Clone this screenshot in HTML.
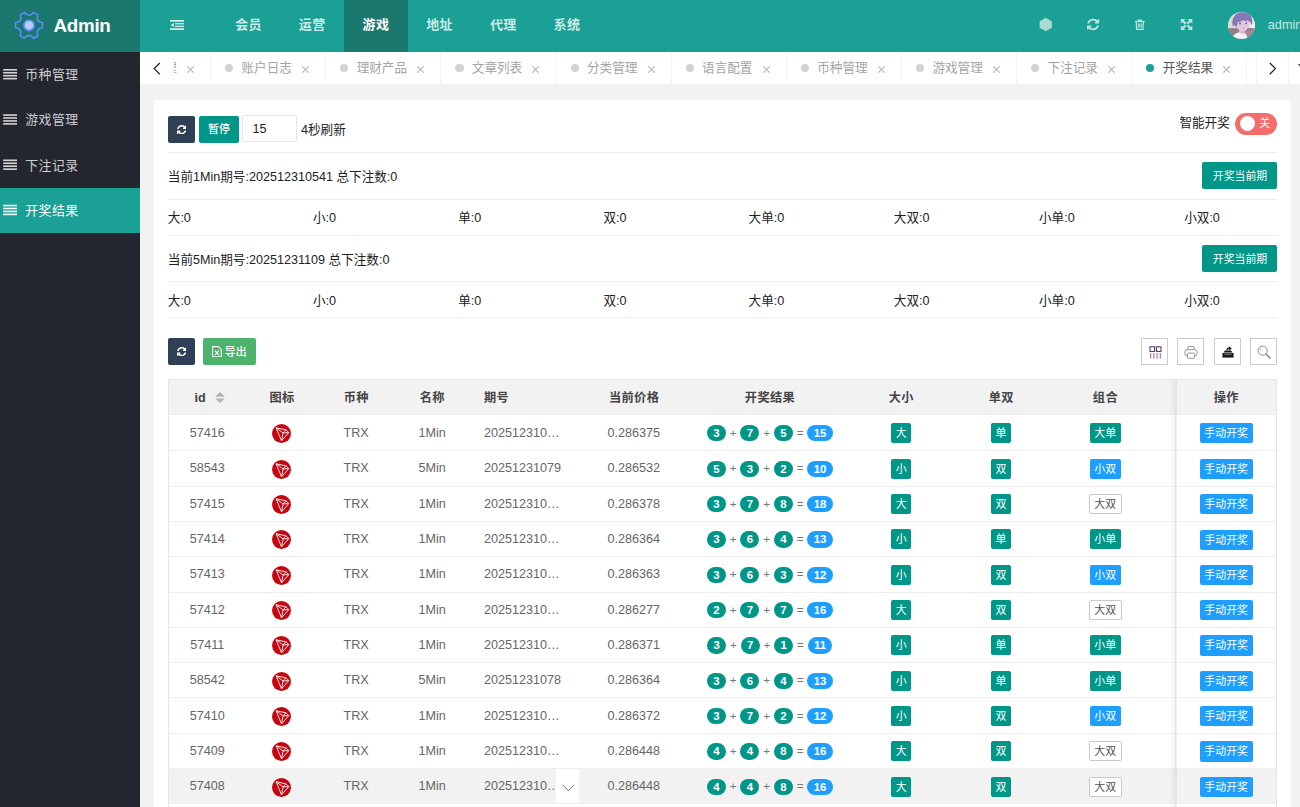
<!DOCTYPE html>
<html lang="zh-CN"><head><meta charset="utf-8"><title>Admin</title>
<style>
*{box-sizing:border-box;margin:0;padding:0}
html,body{width:1300px;height:807px;overflow:hidden;background:#f2f2f2}
body{font-family:"Liberation Sans","Noto Sans CJK SC",sans-serif;font-size:12.6px;color:#222;position:relative}
.abs{position:absolute}
/* header */
.hd{position:absolute;left:0;top:0;width:1300px;height:52px;background:#1aa094}
.logo{position:absolute;left:0;top:0;width:140px;height:52px;background:#1a786e}
.logo .gear{position:absolute;left:14px;top:11px}
.logo .nm{position:absolute;left:53.6px;top:0;line-height:51.6px;font-size:18.8px;letter-spacing:-.3px;font-weight:bold;color:#fff}
.flex{position:absolute;left:170px;top:20px}
.nav{position:absolute;left:216.5px;top:0;height:52px;display:flex}
.nav a{display:block;width:63.7px;height:52px;line-height:49px;text-align:center;color:rgba(255,255,255,.78);font-size:13px;letter-spacing:.4px;text-indent:.4px;font-weight:bold}
.nav a.on{background:#1a786e;color:#fff}
.tool{position:absolute;top:0;color:#bbe3df}
.uname{position:absolute;left:1267.8px;top:0;line-height:50.8px;font-size:12.7px;color:#c4e8e3;white-space:nowrap}
.avatar{position:absolute;left:1227.8px;top:11.8px;width:27.6px;height:27.6px;border-radius:50%;overflow:hidden}
/* sidebar */
.side{position:absolute;left:0;top:52px;width:140px;height:755px;background:#23262e}
.side a{position:absolute;left:0;width:140px;height:45.25px;line-height:45.6px;color:rgba(255,255,255,.78);font-size:12.9px;letter-spacing:.5px;padding-left:25.2px;white-space:nowrap}
.side a.on{background:#1aa094;color:#fff}
.side a i{position:absolute;left:3.2px;top:17.4px;width:13.8px;height:12px;display:block}
.side a i b{display:block;height:1.55px;margin-bottom:1.4px;background:currentColor}
/* tabs */
.tabs{position:absolute;left:140px;top:52px;width:1160px;height:32.2px;background:#fff;overflow:hidden}
.tab{position:absolute;top:0;height:32.2px;width:115.15px;border-right:1px solid #f3f3f3;line-height:33.4px;color:#a4a4a4;white-space:nowrap}
.tab .dot{position:absolute;left:14px;top:12.2px;width:8.2px;height:8.2px;border-radius:50%;background:#d2d2d2}
.tab .tx{position:absolute;left:30.4px;top:0}
.tab .cl{position:absolute;left:91px;top:13.5px}
.tab.on{color:#555}
.tab.on .dot{background:#1aa094}
.ctl{position:absolute;top:0;height:32.2px;background:#fff}
/* main */
.main{position:absolute;left:140px;top:84px;width:1160px;height:723px;background:#f2f2f2}
.card{position:absolute;left:14.4px;top:16px;width:1136.8px;height:720px;background:#fff;border-radius:3px}
.hr{position:absolute;left:13.6px;width:1109px;height:1px;background:#eee}
.btn{position:absolute;height:27.3px;line-height:27.3px;border-radius:2px;color:#fff;font-size:10.9px;text-align:center;white-space:nowrap}
.b-cyan{background:#2f4056}
.b-green{background:#009688}
.b-exp{background:#4db26c}
.inp{position:absolute;border:1px solid #e6e6e6;border-radius:2px;background:#fff;line-height:25px;padding-left:10px;font-size:12.6px;color:#222}
.t{position:absolute;white-space:nowrap;line-height:16px}
.tbox{position:absolute;width:27px;height:27px;border:1px solid #ccc;background:#fff}
.sw{position:absolute;left:1080.4px;top:13.2px;width:42.4px;height:21.6px;border-radius:11px;background:#f56c6c}
.sw:before{content:"";position:absolute;left:5px;top:3.3px;width:15px;height:15px;border-radius:50%;background:#fff}
.sw span{position:absolute;left:24.4px;top:0;line-height:21.6px;font-size:10.9px;color:#fff}
/* table */
.tbwrap{position:absolute;left:13.9px;top:279px;width:1108.6px;height:460px;border-top:1px solid #e6e6e6;border-left:1px solid #e6e6e6;border-right:1px solid #e6e6e6;overflow:hidden}
.tb{border-collapse:separate;border-spacing:0;table-layout:fixed;width:1106.6px}
.tb th,.tb td{height:35.34px;padding:0 13.5px;border-bottom:1px solid #eee;white-space:nowrap;overflow:hidden;text-align:center;color:#666;font-size:12.6px;font-weight:normal;vertical-align:middle;position:relative}
.tb th{background:#f2f2f2;color:#444;font-weight:bold;height:35.2px}
.tb td{background:#fff}
.tb tbody tr:first-child td{height:36px}
.tb tr.hov td{background:#f2f2f2}
.c-id{width:76px}.c-ic{width:73px}.c-bz{width:75.6px}.c-mc{width:76.6px}.c-qh{width:104.8px}.c-pr{width:117.2px}.c-rs{width:154.7px}.c-dx{width:108px}.c-ds{width:91.8px}.c-zh{width:128.5px}.c-op{width:100.4px}
.tb .c-qh{text-align:left}
.ell{overflow:hidden;text-overflow:ellipsis;white-space:nowrap}
.trx{display:block;margin:0 auto;position:relative;top:0.8px}
.bd{display:inline-block;height:16.4px;line-height:16.4px;padding:0 6.4px;border-radius:9px;background:#009688;color:#fff;font-size:11.4px;font-weight:bold;vertical-align:middle;position:relative;top:0.4px}
.bd.bl{background:#1e9fff}
.tg{display:inline-block;height:20px;line-height:20px;padding:0 4.6px;border-radius:2px;background:#009688;color:#fff;font-size:10.9px;vertical-align:middle;position:relative;top:0.4px}
.tg.b{background:#1e9fff}
.tg.w{background:#fff;color:#555;border:1px solid #c9c9c9;line-height:18px}
.op{display:inline-block;height:20.2px;line-height:20.2px;padding:0 4.6px;border-radius:2px;background:#1e9fff;color:#fff;font-size:10.9px;vertical-align:middle;position:relative;top:0.6px}
.tb .c-zh{padding-right:25.4px}
.tb .c-op{border-left:1px solid #eee}
.fixshadow{position:absolute;left:1000px;top:0;width:8px;height:460px;background:linear-gradient(to right,rgba(0,0,0,0),rgba(0,0,0,.06));pointer-events:none}
.sort{display:inline-block;width:10px;height:11px;margin-left:10px;vertical-align:middle;position:relative;top:0.2px;left:2.6px}
.griddown{position:absolute;right:-4.2px;top:0;width:23px;height:33.7px;background:#fff;display:flex;align-items:center;justify-content:center;z-index:3}
.griddown svg{position:relative;top:1.6px;left:.3px}
.tb td.c-qh{overflow:visible}

.ht{position:relative;top:-0.3px;font-size:12.2px;letter-spacing:.4px;margin-right:-.4px}
.hl{position:relative;top:0.8px;left:2.9px}
.sy{font-size:11.7px;color:#777;padding:0 .27px;position:relative;top:.7px}

</style></head><body>
<div class="hd">
<div class="logo"><svg class="gear" width="30" height="29" viewBox="0 0 30 29"><path d="M28.48 16.75 L28.48 11.85 L25.83 11.09 Q22.97 9.70 23.20 6.52 L23.86 3.85 L19.62 1.40 L17.64 3.31 Q15.00 5.10 12.36 3.31 L10.38 1.40 L6.14 3.85 L6.80 6.52 Q7.03 9.70 4.17 11.09 L1.52 11.85 L1.52 16.75 L4.17 17.51 Q7.03 18.90 6.80 22.08 L6.14 24.75 L10.38 27.20 L12.36 25.29 Q15.00 23.50 17.64 25.29 L19.62 27.20 L23.86 24.75 L23.20 22.08 Q22.97 18.90 25.83 17.51 Z" fill="none" stroke="#5a8df6" stroke-width="1.6" stroke-linejoin="round"/><circle cx="15" cy="14.3" r="5.2" fill="#b9ccff" stroke="#5a8df6" stroke-width="1.8"/></svg><span class="nm">Admin</span></div>
<svg class="flex" width="14" height="10" viewBox="0 0 14 10"><g fill="#d9f1ee"><rect x="0" y="0" width="14" height="1.7"/><rect x="4.9" y="3.15" width="9.1" height="1.2"/><rect x="4.9" y="5.75" width="9.1" height="1.2"/><rect x="0" y="8.2" width="14" height="1.7"/><path d="M0.6 4.95 L3.8 2.9 L3.8 7 Z"/></g></svg>
<div class="nav"><a class="">会员</a><a class="">运营</a><a class="on">游戏</a><a class="">地址</a><a class="">代理</a><a class="">系统</a></div>
<svg class="tool" style="left:1030px;top:0" width="180" height="52" viewBox="1030 0 180 52"><path transform="translate(1039.6 17.8) scale(0.946 0.957)" d="M6.5 0 L13 3.6 L13 10.4 L6.5 14 L0 10.4 L0 3.6 Z" fill="#a5dbd4"/><path transform="translate(1087 18.7) scale(0.00794 0.0075)" fill="#bbe3df" d="M1511 928q0 5-1 7-64 268-268 434.500T764 1536q-146 0-282.500-55T238 1324l-129 129q-19 19-45 19t-45-19-19-45V960q0-26 19-45t45-19h448q26 0 45 19t19 45-19 45l-137 137q71 66 161 102t187 36q134 0 250-65t186-179q11-17 53-117 8-23 30-23h192q13 0 22.500 9.500t9.500 22.500zm25-800v448q0 26-19 45t-45 19h-448q-26 0-45-19t-19-45 19-45l138-138Q969 256 768 256q-134 0-250 65T332 500q-11 17-53 117-8 23-30 23H50q-13 0-22.500-9.500T18 608v-7q65-268 270-434.500T768 0q146 0 284 55.500T1297 212l130-129q19-19 45-19t45 19 19 45z"/><g transform="translate(1134.5 19.1) scale(0.482 0.48)" fill="none" stroke="#c4e7e3" stroke-width="2.5"><path d="M1 5 H21"/><path d="M7.5 5 V2 H14.5 V5"/><path d="M3.5 5 L4.5 21.5 H17.5 L18.5 5"/><path d="M8 9 V18 M11 9 V18 M14 9 V18" stroke-width="2"/></g><g transform="translate(1180.8 19) scale(0.479 0.458)" fill="#bbe3df"><path d="M0 0 H10 L0 10 Z M24 0 V10 L14 0 Z M0 24 V14 L10 24 Z M24 24 H14 L24 14 Z"/><path d="M2.6 6 L6 2.6 L21.4 18 L18 21.4 Z M21.4 6 L18 2.6 L2.6 18 L6 21.4 Z"/></g></svg>
<svg class="avatar" viewBox="0 0 28 28"><rect width="28" height="28" fill="#e4e2e3"/><rect x="0" y="3" width="5" height="14" fill="#d9ddd0"/><rect x="23" y="5" width="5" height="12" fill="#f1eff0"/><rect y="16.4" width="28" height="12" fill="#927c86"/><path d="M17 20 L28 17 L28 28 L19 28 Z" fill="#a58a93"/><path d="M4 28 Q5 21.5 11.5 20.5 L16 20.8 Q19.5 22 19.8 28 Z" fill="#f6f1f6"/><path d="M11 17 L17 17 L16.5 22 Q13.5 23 11.5 21 Z" fill="#dcc0d2"/><ellipse cx="15" cy="13.2" rx="6" ry="6.6" fill="#e2c8da"/><path d="M5 15 Q3.2 8 6.5 4 Q10 -0.5 16 0.3 Q22.5 1 24.3 6.5 Q25.3 10 24 13.5 Q23 11 22 9.5 Q21 11 20.3 8.6 Q17.5 9.8 15 8 Q12.5 10.5 9.8 10.3 Q9.6 13.5 8 16.5 Q7.2 14 6.8 13 Q6 14.5 5 15Z" fill="#8577b8"/><path d="M11.2 11.2 q1 -0.6 2 0 q-0.2 1.7 -1 1.7 q-0.9 0 -1 -1.7Z" fill="#54508f"/><path d="M17.6 10.8 q0.9 -0.6 1.8 0 q-0.1 1.6 -0.9 1.6 q-0.8 0 -0.9 -1.6Z" fill="#54508f"/><ellipse cx="15.7" cy="16.9" rx="0.7" ry="0.45" fill="#b66a7a"/></svg>
<span class="uname">admin</span>
</div>
<div class="side">
<a style="top:0.00px">币种管理</a>
<a style="top:45.25px">游戏管理</a>
<a style="top:90.50px">下注记录</a>
<a class="on" style="top:135.75px">开奖结果</a>
<svg style="position:absolute;left:0;top:0" width="20" height="190" viewBox="0 0 20 190"><rect x="3.2" y="17.00" width="13.8" height="1.6" fill="#d4d4d6"/><rect x="3.2" y="19.95" width="13.8" height="1.6" fill="#d4d4d6"/><rect x="3.2" y="22.90" width="13.8" height="1.6" fill="#d4d4d6"/><rect x="3.2" y="25.85" width="13.8" height="1.6" fill="#d4d4d6"/><rect x="3.2" y="62.25" width="13.8" height="1.6" fill="#d4d4d6"/><rect x="3.2" y="65.20" width="13.8" height="1.6" fill="#d4d4d6"/><rect x="3.2" y="68.15" width="13.8" height="1.6" fill="#d4d4d6"/><rect x="3.2" y="71.10" width="13.8" height="1.6" fill="#d4d4d6"/><rect x="3.2" y="107.50" width="13.8" height="1.6" fill="#d4d4d6"/><rect x="3.2" y="110.45" width="13.8" height="1.6" fill="#d4d4d6"/><rect x="3.2" y="113.40" width="13.8" height="1.6" fill="#d4d4d6"/><rect x="3.2" y="116.35" width="13.8" height="1.6" fill="#d4d4d6"/><rect x="3.2" y="152.75" width="13.8" height="1.6" fill="#ffffff"/><rect x="3.2" y="155.70" width="13.8" height="1.6" fill="#ffffff"/><rect x="3.2" y="158.65" width="13.8" height="1.6" fill="#ffffff"/><rect x="3.2" y="161.60" width="13.8" height="1.6" fill="#ffffff"/></svg>
</div>
<div class="tabs">
<div class="tab" style="left:-44.05px"><i class="dot"></i><span class="tx">会员管理</span><svg class="cl" width="7" height="7" viewBox="0 0 7 7"><path d="M0.3 0.3 L6.7 6.7 M6.7 0.3 L0.3 6.7" stroke="#b5b5b5" stroke-width="1.1" fill="none"/></svg></div>
<div class="tab" style="left:71.10px"><i class="dot"></i><span class="tx">账户日志</span><svg class="cl" width="7" height="7" viewBox="0 0 7 7"><path d="M0.3 0.3 L6.7 6.7 M6.7 0.3 L0.3 6.7" stroke="#b5b5b5" stroke-width="1.1" fill="none"/></svg></div>
<div class="tab" style="left:186.25px"><i class="dot"></i><span class="tx">理财产品</span><svg class="cl" width="7" height="7" viewBox="0 0 7 7"><path d="M0.3 0.3 L6.7 6.7 M6.7 0.3 L0.3 6.7" stroke="#b5b5b5" stroke-width="1.1" fill="none"/></svg></div>
<div class="tab" style="left:301.40px"><i class="dot"></i><span class="tx">文章列表</span><svg class="cl" width="7" height="7" viewBox="0 0 7 7"><path d="M0.3 0.3 L6.7 6.7 M6.7 0.3 L0.3 6.7" stroke="#b5b5b5" stroke-width="1.1" fill="none"/></svg></div>
<div class="tab" style="left:416.55px"><i class="dot"></i><span class="tx">分类管理</span><svg class="cl" width="7" height="7" viewBox="0 0 7 7"><path d="M0.3 0.3 L6.7 6.7 M6.7 0.3 L0.3 6.7" stroke="#b5b5b5" stroke-width="1.1" fill="none"/></svg></div>
<div class="tab" style="left:531.70px"><i class="dot"></i><span class="tx">语言配置</span><svg class="cl" width="7" height="7" viewBox="0 0 7 7"><path d="M0.3 0.3 L6.7 6.7 M6.7 0.3 L0.3 6.7" stroke="#b5b5b5" stroke-width="1.1" fill="none"/></svg></div>
<div class="tab" style="left:646.85px"><i class="dot"></i><span class="tx">币种管理</span><svg class="cl" width="7" height="7" viewBox="0 0 7 7"><path d="M0.3 0.3 L6.7 6.7 M6.7 0.3 L0.3 6.7" stroke="#b5b5b5" stroke-width="1.1" fill="none"/></svg></div>
<div class="tab" style="left:762.00px"><i class="dot"></i><span class="tx">游戏管理</span><svg class="cl" width="7" height="7" viewBox="0 0 7 7"><path d="M0.3 0.3 L6.7 6.7 M6.7 0.3 L0.3 6.7" stroke="#b5b5b5" stroke-width="1.1" fill="none"/></svg></div>
<div class="tab" style="left:877.15px"><i class="dot"></i><span class="tx">下注记录</span><svg class="cl" width="7" height="7" viewBox="0 0 7 7"><path d="M0.3 0.3 L6.7 6.7 M6.7 0.3 L0.3 6.7" stroke="#b5b5b5" stroke-width="1.1" fill="none"/></svg></div>
<div class="tab on" style="left:992.30px"><i class="dot"></i><span class="tx">开奖结果</span><svg class="cl" width="7" height="7" viewBox="0 0 7 7"><path d="M0.3 0.3 L6.7 6.7 M6.7 0.3 L0.3 6.7" stroke="#b5b5b5" stroke-width="1.1" fill="none"/></svg></div>
<div class="ctl" style="left:0;width:34px;border-right:1px solid #f3f3f3"><svg style="position:absolute;left:13.2px;top:9.6px" width="8" height="13" viewBox="0 0 8 13"><path d="M6.8 1 L1.2 6.6 L6.8 12.2" fill="none" stroke="#1c2438" stroke-width="1.3"/></svg></div>
<div class="ctl" style="left:1107.2px;width:9.4px;border-right:1px solid #f3f3f3"></div>
<div class="ctl" style="left:1116.6px;width:32px;border-right:1px solid #f3f3f3"><svg style="position:absolute;left:12.4px;top:9.6px" width="8" height="13" viewBox="0 0 8 13"><path d="M0.8 1 L6.4 6.6 L0.8 12.2" fill="none" stroke="#1c2438" stroke-width="1.3"/></svg></div>
<div class="ctl" style="left:1148.6px;width:12px"><svg style="position:absolute;left:9.5px;top:12.2px" width="8" height="6" viewBox="0 0 8 6"><path d="M0 0 H8 L4 5 Z" fill="#333"/></svg></div>
</div>
<div class="main"><div class="card">
<div class="btn b-cyan" style="left:13.6px;top:16.0px;width:27px"><svg width="9.4" height="9.4" viewBox="0 0 1536 1536" style="position:absolute;left:8.9px;top:9.1px"><path fill="#fff" d="M1511 928q0 5-1 7-64 268-268 434.500T764 1536q-146 0-282.500-55T238 1324l-129 129q-19 19-45 19t-45-19-19-45V960q0-26 19-45t45-19h448q26 0 45 19t19 45-19 45l-137 137q71 66 161 102t187 36q134 0 250-65t186-179q11-17 53-117 8-23 30-23h192q13 0 22.500 9.500t9.500 22.500zm25-800v448q0 26-19 45t-45 19h-448q-26 0-45-19t-19-45 19-45l138-138Q969 256 768 256q-134 0-250 65T332 500q-11 17-53 117-8 23-30 23H50q-13 0-22.500-9.500T18 608v-7q65-268 270-434.500T768 0q146 0 284 55.500T1297 212l130-129q19-19 45-19t45 19 19 45z"/></svg></div>
<div class="btn b-green" style="left:44.6px;top:16.0px;width:40px;font-weight:500">暂停</div>
<div class="inp" style="left:88.0px;top:15.4px;width:54.2px;height:26.6px;line-height:26px;padding-left:9px">15</div>
<div class="t" style="left:146.6px;top:21.5px">4秒刷新</div>
<div class="t" style="left:1025.0px;top:14.5px">智能开奖</div>
<div class="sw"><span>关</span></div>
<div class="hr" style="top:52.0px"></div>
<div class="t" style="left:13.4px;top:69.0px">当前1Min期号:202512310541 总下注数:0</div>
<div class="btn b-green" style="left:1047.6px;top:62.0px;width:75px;line-height:28.6px;text-indent:1px">开奖当前期</div>
<div class="hr" style="top:99.0px"></div>
<div class="t" style="left:13.4px;top:109.6px">大:0</div>
<div class="t" style="left:158.6px;top:109.6px">小:0</div>
<div class="t" style="left:303.8px;top:109.6px">单:0</div>
<div class="t" style="left:449.0px;top:109.6px">双:0</div>
<div class="t" style="left:594.2px;top:109.6px">大单:0</div>
<div class="t" style="left:739.4px;top:109.6px">大双:0</div>
<div class="t" style="left:884.6px;top:109.6px">小单:0</div>
<div class="t" style="left:1029.8px;top:109.6px">小双:0</div>
<div class="hr" style="top:135.0px"></div>
<div class="t" style="left:13.4px;top:152.0px">当前5Min期号:20251231109 总下注数:0</div>
<div class="btn b-green" style="left:1047.6px;top:145.0px;width:75px;line-height:28.6px;text-indent:1px">开奖当前期</div>
<div class="hr" style="top:181.0px"></div>
<div class="t" style="left:13.4px;top:192.6px">大:0</div>
<div class="t" style="left:158.6px;top:192.6px">小:0</div>
<div class="t" style="left:303.8px;top:192.6px">单:0</div>
<div class="t" style="left:449.0px;top:192.6px">双:0</div>
<div class="t" style="left:594.2px;top:192.6px">大单:0</div>
<div class="t" style="left:739.4px;top:192.6px">大双:0</div>
<div class="t" style="left:884.6px;top:192.6px">小单:0</div>
<div class="t" style="left:1029.8px;top:192.6px">小双:0</div>
<div class="hr" style="top:217.0px"></div>
<div class="btn b-cyan" style="left:13.6px;top:238.0px;width:27px"><svg width="9.4" height="9.4" viewBox="0 0 1536 1536" style="position:absolute;left:8.9px;top:9.1px"><path fill="#fff" d="M1511 928q0 5-1 7-64 268-268 434.500T764 1536q-146 0-282.500-55T238 1324l-129 129q-19 19-45 19t-45-19-19-45V960q0-26 19-45t45-19h448q26 0 45 19t19 45-19 45l-137 137q71 66 161 102t187 36q134 0 250-65t186-179q11-17 53-117 8-23 30-23h192q13 0 22.500 9.500t9.500 22.500zm25-800v448q0 26-19 45t-45 19h-448q-26 0-45-19t-19-45 19-45l138-138Q969 256 768 256q-134 0-250 65T332 500q-11 17-53 117-8 23-30 23H50q-13 0-22.500-9.500T18 608v-7q65-268 270-434.500T768 0q146 0 284 55.500T1297 212l130-129q19-19 45-19t45 19 19 45z"/></svg></div>
<div class="btn b-exp" style="left:48.6px;top:238.0px;width:53px;font-weight:500;line-height:28.8px"><svg width="9.8" height="11.4" viewBox="0 0 9 10" preserveAspectRatio="none" style="vertical-align:-1.1px;margin-right:2.6px"><path d="M0.5 0.5 H6 L8.5 3 V9.5 H0.5 Z" fill="none" stroke="#fff" stroke-width="1"/><path d="M2.7 4 L6.3 8 M6.3 4 L2.7 8" stroke="#fff" stroke-width="1" fill="none"/></svg>导出</div>
<div class="tbox" style="left:986.6px;top:238.0px;display:flex;align-items:center;justify-content:center"><svg width="13" height="13" viewBox="0 0 13 13" style="position:relative;top:.5px;left:1.2px"><g fill="none" stroke="#4b2a5e" stroke-width="1"><rect x="1" y="0.8" width="4.6" height="4.6"/><rect x="7.4" y="0.8" width="4.6" height="4.6"/></g><path d="M1.7 7 V12.6 M4.9 7 V12.6 M8.1 7 V12.6 M11.3 7 V12.6" stroke="#97307f" stroke-width="0.8" fill="none"/></svg></div>
<div class="tbox" style="left:1022.6px;top:238.0px;display:flex;align-items:center;justify-content:center"><svg width="14" height="13" viewBox="0 0 15 14" style="position:relative;top:.9px;left:.3px"><g fill="none" stroke="#8a8a8a" stroke-width="1"><path d="M4 4 V2 Q4 0.6 5.4 0.6 H9.6 Q11 0.6 11 2 V4"/><rect x="0.9" y="4" width="13.2" height="6.6" rx="2.6"/><rect x="3.8" y="7.6" width="7.4" height="5.6" rx="1.2" fill="#fff"/></g></svg></div>
<div class="tbox" style="left:1059.6px;top:238.0px;display:flex;align-items:center;justify-content:center"><svg width="12" height="12" viewBox="0 0 12 12" style="position:relative;top:.4px;left:.2px"><g fill="#1a1a1a"><path d="M0.4 7 H11.6 V11.6 H0.4 Z"/><path d="M1.6 6.6 L3 4.4 H9 L10.4 6.6 Z"/><path d="M4.2 4 Q4.6 1.6 7 1.6 V0.3 L9.8 2.4 L7 4.5 V3.2 Q5.8 3.2 5.4 4 Z"/></g><path d="M2.4 8.2 H9.6" stroke="#fff" stroke-width=".5"/></svg></div>
<div class="tbox" style="left:1095.6px;top:238.0px;display:flex;align-items:center;justify-content:center"><svg width="15" height="15" viewBox="0 0 15 15" style="position:relative;top:1.2px;left:.6px"><g fill="none" stroke="#8d8d92" stroke-width="1"><circle cx="5.6" cy="5.6" r="4.6"/><path d="M3 5.6 A2.7 2.7 0 0 1 4.3 3.3" stroke-width=".7"/><path d="M9.2 9.2 L13 13" stroke-width="1.7" stroke-linecap="round"/></g></svg></div>
<div class="tbwrap">
<table class="tb"><thead><tr><th class="c-id"><span class="hl">id</span><svg class="sort" viewBox="0 0 10 11"><path d="M0.2 4.7 L5 0 L9.8 4.7 Z M0.2 6.5 L9.8 6.5 L5 11 Z" fill="#b2b2b2"/></svg></th><th class="c-ic"><span class="ht">图标</span></th><th class="c-bz"><span class="ht">币种</span></th><th class="c-mc"><span class="ht">名称</span></th><th class="c-qh"><span class="ht">期号</span></th><th class="c-pr"><span class="ht">当前价格</span></th><th class="c-rs"><span class="ht">开奖结果</span></th><th class="c-dx"><span class="ht">大小</span></th><th class="c-ds"><span class="ht">单双</span></th><th class="c-zh"><span class="ht">组合</span></th><th class="c-op"><span class="ht">操作</span></th></tr></thead><tbody>
<tr><td class="c-id">57416</td><td class="c-ic"><svg class="trx" width="19" height="19" viewBox="0 0 19 19"><circle cx="9.5" cy="9.5" r="9.45" fill="#c5050f"/><path d="M4.1 3.8 L13.9 5.8 L16.8 8.6 L9.5 16.8 Z M4.1 3.8 L11.1 8.9 L13.9 5.8 M11.1 8.9 L9.5 16.8 M11.1 8.9 L16.8 8.6" fill="none" stroke="#fff" stroke-opacity=".92" stroke-width="0.95" stroke-linejoin="round"/></svg></td><td class="c-bz">TRX</td><td class="c-mc">1Min</td><td class="c-qh"><div class="ell">202512310541</div></td><td class="c-pr">0.286375</td><td class="c-rs"><span class="bd">3</span> <span class="sy">+</span> <span class="bd">7</span> <span class="sy">+</span> <span class="bd">5</span> <span class="sy">=</span> <span class="bd bl">15</span></td><td class="c-dx"><span class="tg">大</span></td><td class="c-ds"><span class="tg">单</span></td><td class="c-zh"><span class="tg g">大单</span></td><td class="c-op"><span class="op">手动开奖</span></td></tr>
<tr><td class="c-id">58543</td><td class="c-ic"><svg class="trx" width="19" height="19" viewBox="0 0 19 19"><circle cx="9.5" cy="9.5" r="9.45" fill="#c5050f"/><path d="M4.1 3.8 L13.9 5.8 L16.8 8.6 L9.5 16.8 Z M4.1 3.8 L11.1 8.9 L13.9 5.8 M11.1 8.9 L9.5 16.8 M11.1 8.9 L16.8 8.6" fill="none" stroke="#fff" stroke-opacity=".92" stroke-width="0.95" stroke-linejoin="round"/></svg></td><td class="c-bz">TRX</td><td class="c-mc">5Min</td><td class="c-qh"><div class="ell">20251231079</div></td><td class="c-pr">0.286532</td><td class="c-rs"><span class="bd">5</span> <span class="sy">+</span> <span class="bd">3</span> <span class="sy">+</span> <span class="bd">2</span> <span class="sy">=</span> <span class="bd bl">10</span></td><td class="c-dx"><span class="tg">小</span></td><td class="c-ds"><span class="tg">双</span></td><td class="c-zh"><span class="tg b">小双</span></td><td class="c-op"><span class="op">手动开奖</span></td></tr>
<tr><td class="c-id">57415</td><td class="c-ic"><svg class="trx" width="19" height="19" viewBox="0 0 19 19"><circle cx="9.5" cy="9.5" r="9.45" fill="#c5050f"/><path d="M4.1 3.8 L13.9 5.8 L16.8 8.6 L9.5 16.8 Z M4.1 3.8 L11.1 8.9 L13.9 5.8 M11.1 8.9 L9.5 16.8 M11.1 8.9 L16.8 8.6" fill="none" stroke="#fff" stroke-opacity=".92" stroke-width="0.95" stroke-linejoin="round"/></svg></td><td class="c-bz">TRX</td><td class="c-mc">1Min</td><td class="c-qh"><div class="ell">202512310540</div></td><td class="c-pr">0.286378</td><td class="c-rs"><span class="bd">3</span> <span class="sy">+</span> <span class="bd">7</span> <span class="sy">+</span> <span class="bd">8</span> <span class="sy">=</span> <span class="bd bl">18</span></td><td class="c-dx"><span class="tg">大</span></td><td class="c-ds"><span class="tg">双</span></td><td class="c-zh"><span class="tg w">大双</span></td><td class="c-op"><span class="op">手动开奖</span></td></tr>
<tr><td class="c-id">57414</td><td class="c-ic"><svg class="trx" width="19" height="19" viewBox="0 0 19 19"><circle cx="9.5" cy="9.5" r="9.45" fill="#c5050f"/><path d="M4.1 3.8 L13.9 5.8 L16.8 8.6 L9.5 16.8 Z M4.1 3.8 L11.1 8.9 L13.9 5.8 M11.1 8.9 L9.5 16.8 M11.1 8.9 L16.8 8.6" fill="none" stroke="#fff" stroke-opacity=".92" stroke-width="0.95" stroke-linejoin="round"/></svg></td><td class="c-bz">TRX</td><td class="c-mc">1Min</td><td class="c-qh"><div class="ell">202512310539</div></td><td class="c-pr">0.286364</td><td class="c-rs"><span class="bd">3</span> <span class="sy">+</span> <span class="bd">6</span> <span class="sy">+</span> <span class="bd">4</span> <span class="sy">=</span> <span class="bd bl">13</span></td><td class="c-dx"><span class="tg">小</span></td><td class="c-ds"><span class="tg">单</span></td><td class="c-zh"><span class="tg g">小单</span></td><td class="c-op"><span class="op">手动开奖</span></td></tr>
<tr><td class="c-id">57413</td><td class="c-ic"><svg class="trx" width="19" height="19" viewBox="0 0 19 19"><circle cx="9.5" cy="9.5" r="9.45" fill="#c5050f"/><path d="M4.1 3.8 L13.9 5.8 L16.8 8.6 L9.5 16.8 Z M4.1 3.8 L11.1 8.9 L13.9 5.8 M11.1 8.9 L9.5 16.8 M11.1 8.9 L16.8 8.6" fill="none" stroke="#fff" stroke-opacity=".92" stroke-width="0.95" stroke-linejoin="round"/></svg></td><td class="c-bz">TRX</td><td class="c-mc">1Min</td><td class="c-qh"><div class="ell">202512310538</div></td><td class="c-pr">0.286363</td><td class="c-rs"><span class="bd">3</span> <span class="sy">+</span> <span class="bd">6</span> <span class="sy">+</span> <span class="bd">3</span> <span class="sy">=</span> <span class="bd bl">12</span></td><td class="c-dx"><span class="tg">小</span></td><td class="c-ds"><span class="tg">双</span></td><td class="c-zh"><span class="tg b">小双</span></td><td class="c-op"><span class="op">手动开奖</span></td></tr>
<tr><td class="c-id">57412</td><td class="c-ic"><svg class="trx" width="19" height="19" viewBox="0 0 19 19"><circle cx="9.5" cy="9.5" r="9.45" fill="#c5050f"/><path d="M4.1 3.8 L13.9 5.8 L16.8 8.6 L9.5 16.8 Z M4.1 3.8 L11.1 8.9 L13.9 5.8 M11.1 8.9 L9.5 16.8 M11.1 8.9 L16.8 8.6" fill="none" stroke="#fff" stroke-opacity=".92" stroke-width="0.95" stroke-linejoin="round"/></svg></td><td class="c-bz">TRX</td><td class="c-mc">1Min</td><td class="c-qh"><div class="ell">202512310537</div></td><td class="c-pr">0.286277</td><td class="c-rs"><span class="bd">2</span> <span class="sy">+</span> <span class="bd">7</span> <span class="sy">+</span> <span class="bd">7</span> <span class="sy">=</span> <span class="bd bl">16</span></td><td class="c-dx"><span class="tg">大</span></td><td class="c-ds"><span class="tg">双</span></td><td class="c-zh"><span class="tg w">大双</span></td><td class="c-op"><span class="op">手动开奖</span></td></tr>
<tr><td class="c-id">57411</td><td class="c-ic"><svg class="trx" width="19" height="19" viewBox="0 0 19 19"><circle cx="9.5" cy="9.5" r="9.45" fill="#c5050f"/><path d="M4.1 3.8 L13.9 5.8 L16.8 8.6 L9.5 16.8 Z M4.1 3.8 L11.1 8.9 L13.9 5.8 M11.1 8.9 L9.5 16.8 M11.1 8.9 L16.8 8.6" fill="none" stroke="#fff" stroke-opacity=".92" stroke-width="0.95" stroke-linejoin="round"/></svg></td><td class="c-bz">TRX</td><td class="c-mc">1Min</td><td class="c-qh"><div class="ell">202512310536</div></td><td class="c-pr">0.286371</td><td class="c-rs"><span class="bd">3</span> <span class="sy">+</span> <span class="bd">7</span> <span class="sy">+</span> <span class="bd">1</span> <span class="sy">=</span> <span class="bd bl">11</span></td><td class="c-dx"><span class="tg">小</span></td><td class="c-ds"><span class="tg">单</span></td><td class="c-zh"><span class="tg g">小单</span></td><td class="c-op"><span class="op">手动开奖</span></td></tr>
<tr><td class="c-id">58542</td><td class="c-ic"><svg class="trx" width="19" height="19" viewBox="0 0 19 19"><circle cx="9.5" cy="9.5" r="9.45" fill="#c5050f"/><path d="M4.1 3.8 L13.9 5.8 L16.8 8.6 L9.5 16.8 Z M4.1 3.8 L11.1 8.9 L13.9 5.8 M11.1 8.9 L9.5 16.8 M11.1 8.9 L16.8 8.6" fill="none" stroke="#fff" stroke-opacity=".92" stroke-width="0.95" stroke-linejoin="round"/></svg></td><td class="c-bz">TRX</td><td class="c-mc">5Min</td><td class="c-qh"><div class="ell">20251231078</div></td><td class="c-pr">0.286364</td><td class="c-rs"><span class="bd">3</span> <span class="sy">+</span> <span class="bd">6</span> <span class="sy">+</span> <span class="bd">4</span> <span class="sy">=</span> <span class="bd bl">13</span></td><td class="c-dx"><span class="tg">小</span></td><td class="c-ds"><span class="tg">单</span></td><td class="c-zh"><span class="tg g">小单</span></td><td class="c-op"><span class="op">手动开奖</span></td></tr>
<tr><td class="c-id">57410</td><td class="c-ic"><svg class="trx" width="19" height="19" viewBox="0 0 19 19"><circle cx="9.5" cy="9.5" r="9.45" fill="#c5050f"/><path d="M4.1 3.8 L13.9 5.8 L16.8 8.6 L9.5 16.8 Z M4.1 3.8 L11.1 8.9 L13.9 5.8 M11.1 8.9 L9.5 16.8 M11.1 8.9 L16.8 8.6" fill="none" stroke="#fff" stroke-opacity=".92" stroke-width="0.95" stroke-linejoin="round"/></svg></td><td class="c-bz">TRX</td><td class="c-mc">1Min</td><td class="c-qh"><div class="ell">202512310535</div></td><td class="c-pr">0.286372</td><td class="c-rs"><span class="bd">3</span> <span class="sy">+</span> <span class="bd">7</span> <span class="sy">+</span> <span class="bd">2</span> <span class="sy">=</span> <span class="bd bl">12</span></td><td class="c-dx"><span class="tg">小</span></td><td class="c-ds"><span class="tg">双</span></td><td class="c-zh"><span class="tg b">小双</span></td><td class="c-op"><span class="op">手动开奖</span></td></tr>
<tr><td class="c-id">57409</td><td class="c-ic"><svg class="trx" width="19" height="19" viewBox="0 0 19 19"><circle cx="9.5" cy="9.5" r="9.45" fill="#c5050f"/><path d="M4.1 3.8 L13.9 5.8 L16.8 8.6 L9.5 16.8 Z M4.1 3.8 L11.1 8.9 L13.9 5.8 M11.1 8.9 L9.5 16.8 M11.1 8.9 L16.8 8.6" fill="none" stroke="#fff" stroke-opacity=".92" stroke-width="0.95" stroke-linejoin="round"/></svg></td><td class="c-bz">TRX</td><td class="c-mc">1Min</td><td class="c-qh"><div class="ell">202512310534</div></td><td class="c-pr">0.286448</td><td class="c-rs"><span class="bd">4</span> <span class="sy">+</span> <span class="bd">4</span> <span class="sy">+</span> <span class="bd">8</span> <span class="sy">=</span> <span class="bd bl">16</span></td><td class="c-dx"><span class="tg">大</span></td><td class="c-ds"><span class="tg">双</span></td><td class="c-zh"><span class="tg w">大双</span></td><td class="c-op"><span class="op">手动开奖</span></td></tr>
<tr class="hov"><td class="c-id">57408</td><td class="c-ic"><svg class="trx" width="19" height="19" viewBox="0 0 19 19"><circle cx="9.5" cy="9.5" r="9.45" fill="#c5050f"/><path d="M4.1 3.8 L13.9 5.8 L16.8 8.6 L9.5 16.8 Z M4.1 3.8 L11.1 8.9 L13.9 5.8 M11.1 8.9 L9.5 16.8 M11.1 8.9 L16.8 8.6" fill="none" stroke="#fff" stroke-opacity=".92" stroke-width="0.95" stroke-linejoin="round"/></svg></td><td class="c-bz">TRX</td><td class="c-mc">1Min</td><td class="c-qh"><div class="ell">202512310533</div><i class="griddown"><svg width="13" height="8" viewBox="0 0 13 8"><path d="M0.8 0.8 L6.5 6.8 L12.2 0.8" fill="none" stroke="#777" stroke-width="1"/></svg></i></td><td class="c-pr">0.286448</td><td class="c-rs"><span class="bd">4</span> <span class="sy">+</span> <span class="bd">4</span> <span class="sy">+</span> <span class="bd">8</span> <span class="sy">=</span> <span class="bd bl">16</span></td><td class="c-dx"><span class="tg">大</span></td><td class="c-ds"><span class="tg">双</span></td><td class="c-zh"><span class="tg w">大双</span></td><td class="c-op"><span class="op">手动开奖</span></td></tr>
<tr><td class="c-id">57407</td><td class="c-ic"><svg class="trx" width="19" height="19" viewBox="0 0 19 19"><circle cx="9.5" cy="9.5" r="9.45" fill="#c5050f"/><path d="M4.1 3.8 L13.9 5.8 L16.8 8.6 L9.5 16.8 Z M4.1 3.8 L11.1 8.9 L13.9 5.8 M11.1 8.9 L9.5 16.8 M11.1 8.9 L16.8 8.6" fill="none" stroke="#fff" stroke-opacity=".92" stroke-width="0.95" stroke-linejoin="round"/></svg></td><td class="c-bz">TRX</td><td class="c-mc">1Min</td><td class="c-qh"><div class="ell">202512310532</div></td><td class="c-pr">0.286450</td><td class="c-rs"><span class="bd">2</span> <span class="sy">+</span> <span class="bd">5</span> <span class="sy">+</span> <span class="bd">6</span> <span class="sy">=</span> <span class="bd bl">13</span></td><td class="c-dx"><span class="tg">小</span></td><td class="c-ds"><span class="tg">单</span></td><td class="c-zh"><span class="tg g">小单</span></td><td class="c-op"><span class="op">手动开奖</span></td></tr>
</tbody></table>
<div class="fixshadow"></div>
</div>
</div></div>
</body></html>
